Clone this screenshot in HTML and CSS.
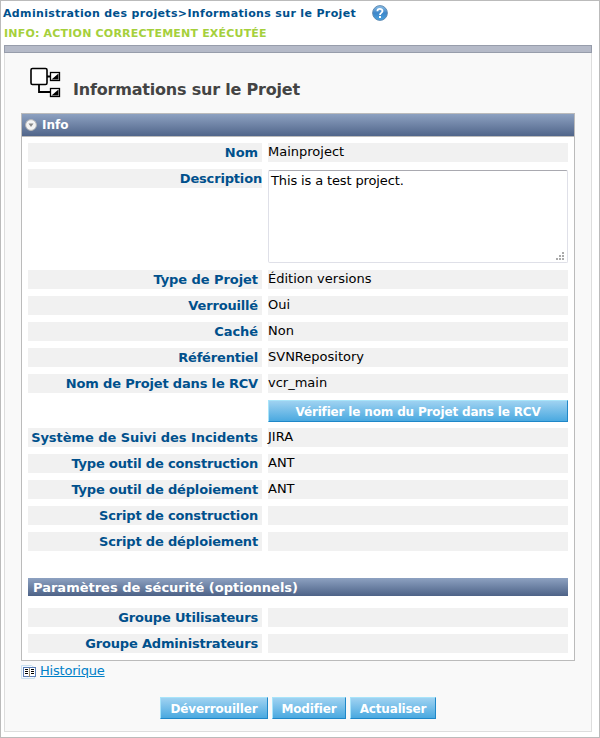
FILE: index.html
```html
<!DOCTYPE html>
<html lang="fr">
<head>
<meta charset="utf-8">
<title>Informations sur le Projet</title>
<link rel="stylesheet" href="styles.css">
</head>
<body>
<header class="top">
  <div class="crumbs"><span class="crumb-text">Administration des projets&gt;Informations sur le Projet</span>
    <svg class="help" width="16" height="16" viewBox="0 0 16 16">
      <defs><linearGradient id="hg" x1="0" y1="0" x2="0" y2="1"><stop offset="0" stop-color="#8fc1e8"/><stop offset=".5" stop-color="#3d86c9"/><stop offset="1" stop-color="#4aa3e0"/></linearGradient></defs>
      <circle cx="8" cy="8" r="7.4" fill="url(#hg)" stroke="#5b86ae" stroke-width=".9"/>
      <path d="M5.400 6.200C5.400 3.200 10.500 3.200 10.500 6.100C10.500 7.900 8 7.900 8 9.900" fill="none" stroke="#fff" stroke-width="1.8"/>
      <rect x="7" y="11" width="2" height="2" fill="#fff"/>
    </svg>
  </div>
  <div class="message">INFO: ACTION CORRECTEMENT EXÉCUTÉE</div>
</header>
<div class="bar"></div>
<main class="page">
  <div class="title">
    <svg width="31" height="31" viewBox="0 0 31 31">
      <rect x="1" y="1.500" width="16" height="16" rx="1.5" fill="#fff" stroke="#000" stroke-width="1.6"/>
      <path d="M17 9.500H21M9 18V25H21" fill="none" stroke="#000" stroke-width="1.8"/>
      <rect x="20.500" y="5.500" width="9" height="8" fill="#fff" stroke="#000" stroke-width="1.3"/>
      <path d="M28.500 6.500V12.500H21.500Z"/>
      <rect x="20.500" y="21.500" width="9" height="8" fill="#fff" stroke="#000" stroke-width="1.3"/>
      <path d="M28.500 22.500V28.500H21.500Z"/>
    </svg>
    <h1>Informations sur le Projet</h1>
  </div>
  <section class="panel">
    <div class="panel-head">
      <svg width="12" height="12" viewBox="0 0 12 12"><circle cx="6" cy="6" r="5.400" fill="#f4f4f4" stroke="#b5b5b5"/><path d="M3.500 4.500H8.500L6 8Z" fill="#888"/></svg>
      <span>Info</span>
    </div>
    <div class="panel-body">
      <div class="row"><div class="label short">Nom</div><div class="value">Mainproject</div></div>
      <div class="row row-area"><div class="label flush">Description</div>
        <div class="area">This is a test project.
          <svg class="grip" width="8" height="8" viewBox="0 0 8 8" fill="#aaa"><path d="M6 0h2v2h-2zM3 3h2v2h-2zM6 3h2v2h-2zM0 6h2v2h-2zM3 6h2v2h-2zM6 6h2v2h-2z"/></svg>
        </div></div>
      <div class="row"><div class="label short">Type de Projet</div><div class="value">Édition versions</div></div>
      <div class="row"><div class="label">Verrouillé</div><div class="value">Oui</div></div>
      <div class="row"><div class="label short">Caché</div><div class="value">Non</div></div>
      <div class="row"><div class="label">Référentiel</div><div class="value">SVNRepository</div></div>
      <div class="row"><div class="label">Nom de Projet dans le RCV</div><div class="value">vcr_main</div></div>
      <button class="btn btn-wide">Vérifier le nom du Projet dans le RCV</button>
      <div class="row"><div class="label short">Système de Suivi des Incidents</div><div class="value">JIRA</div></div>
      <div class="row"><div class="label">Type outil de construction</div><div class="value">ANT</div></div>
      <div class="row"><div class="label">Type outil de déploiement</div><div class="value">ANT</div></div>
      <div class="row"><div class="label">Script de construction</div><div class="value"></div></div>
      <div class="row"><div class="label">Script de déploiement</div><div class="value"></div></div>
      <h2>Paramètres de sécurité (optionnels)</h2>
      <div class="row"><div class="label">Groupe Utilisateurs</div><div class="value"></div></div>
      <div class="row"><div class="label">Groupe Administrateurs</div><div class="value"></div></div>
    </div>
  </section>
  <div class="history">
    <svg width="15" height="14" viewBox="0 0 15 14">
      <path d="M.5 .5H10.500L13.500 3V13.500H.5Z" fill="#f4f9fd" stroke="#c8dff0"/>
      <rect x="2.500" y="2.500" width="12" height="9" fill="#fff" stroke="#5c7fb8"/>
      <path d="M4 4.500H7M4 6.500H7M4 8.500H7M10 4.500H13M10 6.500H13M10 8.500H13" stroke="#000"/>
      <path d="M8.500 3V12" stroke="#988c70"/>
    </svg>
    <a href="#">Historique</a>
  </div>
  <div class="actions">
    <button class="btn b1">Déverrouiller</button>
    <button class="btn b2">Modifier</button>
    <button class="btn b3">Actualiser</button>
  </div>
</main>
</body>
</html>
```
FILE: styles.css
```css
* { box-sizing: border-box; }
body {
  margin: 0;
  height: 738px;
  padding: 0 7px 0 3px;
  border: 1px solid #bbb;
  background: #fff;
  font: 13px/17px "DejaVu Sans", Verdana, sans-serif;
  color: #000;
  overflow: hidden;
}
.top { height: 44px; font-weight: bold; font-size: 11px; margin-left: -1px; }
.crumbs { display: flex; align-items: center; height: 24px; color: #00508c; }
.crumb-text { width: 369px; white-space: nowrap; letter-spacing: .35px; }
.message { padding: 1px 0 0 1px; line-height: 16px; letter-spacing: .2px; color: #a5d03c; }
.bar { height: 8px; background: #b5bac8; border: 1px solid #979dab; }
.page {
  height: 679px;
  padding: 14px 16px 0;
  border: 1px solid #ddd;
  border-top: 0;
  background: #f9f9f9;
}
.title { display: flex; height: 46px; padding-left: 9px; }
.title h1 { margin: 13px 0 0 12px; font-size: 16px; line-height: 20px; letter-spacing: -.2px; color: #444; white-space: nowrap; }
.panel { width: 554px; height: 548px; border: 1px solid #bbb; background: #fff; }
.panel-head {
  display: flex;
  align-items: center;
  gap: 5px;
  height: 23px;
  padding-left: 3px;
  border-bottom: 1px solid #bbb;
  background: linear-gradient(#8da1c1, #50658a);
  color: #fff;
  font-weight: bold;
  font-size: 12px;
}
.panel-head span { padding-top: 1px; }
.panel-body { padding: 6px 6px 0; }
.row { display: grid; grid-template-columns: 234px 300px; column-gap: 6px; height: 19px; margin-bottom: 7px; }
.label { height: 19px; padding-right: 4px; background: #f1f1f1; color: #00508c; font-weight: bold; line-height: 19px; letter-spacing: -.17px; text-align: right; white-space: nowrap; }
.label.short { letter-spacing: -.06px; }
.label.flush { padding-right: 0; }
.value { height: 19px; background: #f1f1f1; line-height: 17px; }
.row-area { height: 94px; }
.area {
  position: relative;
  height: 93px;
  margin-top: 1px;
  padding: 1px 2px;
  border: 1px solid #dfe0e8;
  border-top-color: #a9a9b0;
  border-radius: 2px;
  background: #fff;
  letter-spacing: -.13px;
}
.grip { position: absolute; right: 3px; bottom: 2px; }
.btn {
  height: 22px;
  padding: 0;
  border: 1px solid #1f87c8;
  border-top-color: #a8e4fa;
  border-left-color: #a8e4fa;
  background: linear-gradient(#9fd2f1, #4aa9e0);
  color: #fff;
  font: bold 12px/18px "DejaVu Sans", Verdana, sans-serif;
  letter-spacing: -.16px;
  white-space: nowrap;
}
.btn-wide { display: block; width: 300px; margin: 0 0 6px 240px; padding-top: 1px; }
h2 {
  height: 18px;
  margin: 27px 0 12px;
  padding-left: 5px;
  background: linear-gradient(#8da1c1, #4d6287);
  color: #fff;
  font-size: 13px;
  line-height: 19px;
}
.history { display: flex; height: 36px; padding-top: 4px; gap: 4px; }
.history a { margin-top: -3px; color: #0080c8; letter-spacing: -.2px; }
.actions { display: flex; gap: 4px; margin-left: 139px; }
.actions .btn { padding-top: 1px; }
.b1 { width: 108px; }
.b2 { width: 74px; }
.b3 { width: 86px; }
```
